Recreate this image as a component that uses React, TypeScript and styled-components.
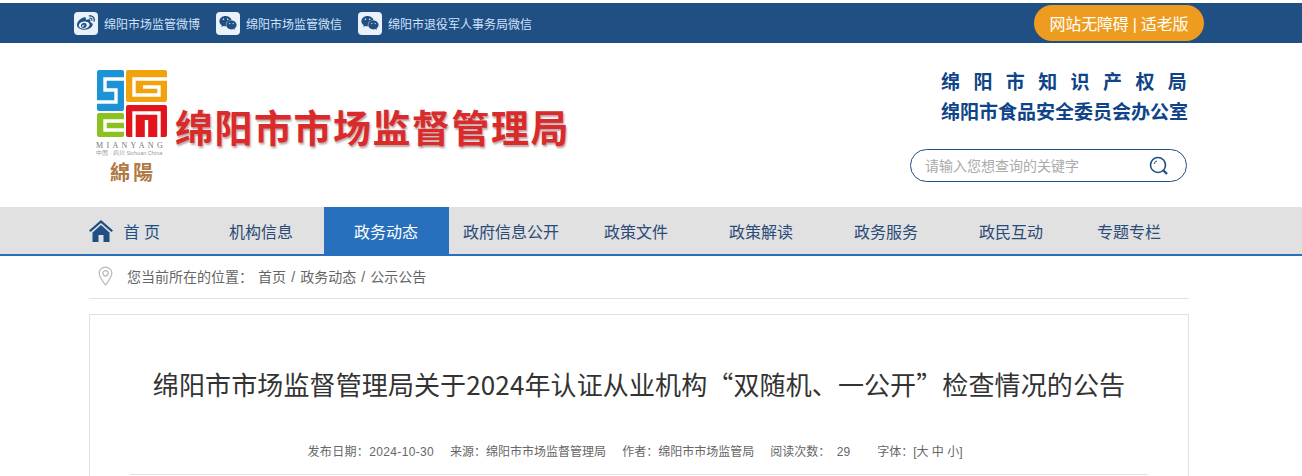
import styled, { createGlobalStyle } from "styled-components";
import { FaWeibo, FaWeixin } from "react-icons/fa";

const GlobalStyle = createGlobalStyle`
  html, body {
    margin: 0;
    padding: 0;
    background: #fff;
    font-family: "Liberation Sans", "Noto Sans CJK SC", sans-serif;
  }
  * { box-sizing: border-box; }
`

const navItems = ["机构信息", "政务动态", "政府信息公开", "政策文件", "政策解读", "政务服务", "政民互动", "专题专栏"];

const Page = styled.div`
  width: 1302px;
  height: 476px;
  padding-top: 3px;
  overflow: hidden;
`
const TopBar = styled.div`
  display: flex;
  justify-content: center;
  height: 40px;
  padding-right: 24px;
  background: #1f4f83;
`
const TopInner = styled.div`
  display: flex;
  align-items: center;
  justify-content: space-between;
  width: 1130px;
`
const Socials = styled.div`
  display: flex;
  gap: 16px;
`
const Social = styled.a`
  display: flex;
  align-items: center;
  gap: 6px;
  color: #cfe3fb;
  font-size: 12px;
`
const SocialIcon = styled.span`
  display: flex;
  align-items: center;
  justify-content: center;
  width: 24px;
  height: 23px;
  border-radius: 4px;
  background: #eaf1fb;
  color: #1f4f83;
  font-size: 18px;
`
const OldButton = styled.a`
  display: flex;
  align-items: center;
  justify-content: center;
  width: 170px;
  height: 36px;
  border-radius: 18px;
  background: #ee9c20;
  color: #fff;
  font-size: 16px;
  letter-spacing: -0.2px;
`
const Header = styled.header`
  display: flex;
  justify-content: center;
  height: 164px;
  padding-right: 24px;
`
const HeaderInner = styled.div`
  display: flex;
  justify-content: space-between;
  width: 1100px;
`
const Brand = styled.div`
  display: flex;
  align-items: flex-start;
  padding: 27px 0 0 7px;
`
const SiteName = styled.h1`
  margin: 36px 0 0 7px;
  color: #d92b2b;
  font-size: 38px;
  line-height: 46px;
  font-weight: 700;
  letter-spacing: 1.5px;
  text-shadow: 1px 2px 2px rgba(90, 30, 30, 0.4);
  white-space: nowrap;
`
const HeaderRight = styled.div`
  display: flex;
  flex-direction: column;
  align-items: flex-end;
  padding: 25px 2px 0 0;
`
const OrgName = styled.div<{ $spread?: boolean }>`
  width: 246px;
  height: 30px;
  color: #0f4488;
  font-size: 19px;
  line-height: 30px;
  font-weight: 700;
  white-space: nowrap;
  letter-spacing: ${(p) => (p.$spread ? "13.4px" : "0")};
`
const SearchBox = styled.div`
  display: flex;
  align-items: center;
  justify-content: space-between;
  width: 277px;
  height: 33px;
  margin-top: 21px;
  padding: 0 17px 0 14px;
  border: 1px solid #1f4f83;
  border-radius: 17px;
  color: #aaa;
  font-size: 14px;
`
const SearchHint = styled.span`
  margin-bottom: 2px;
`
const NavBar = styled.nav`
  display: flex;
  justify-content: center;
  height: 49px;
  background: #e1e1e1;
  border-bottom: 2px solid #2870bd;
`
const NavInner = styled.div`
  display: flex;
  width: 1125px;
`
const HomeItem = styled.a`
  display: flex;
  align-items: center;
  gap: 11px;
  width: 110px;
  height: 47px;
  color: #1f4f83;
  font-size: 16px;
`
const NavItem = styled.a<{ $active?: boolean }>`
  display: flex;
  align-items: center;
  justify-content: center;
  width: 125px;
  height: 47px;
  color: ${(p) => (p.$active ? "#fff" : "#2a4a78")};
  background: ${(p) => (p.$active ? "#2870bd" : "transparent")};
  font-size: 16px;
  white-space: nowrap;

  &:last-child {
    width: 111px;
  }
`
const Main = styled.main`
  display: flex;
  flex-direction: column;
  width: 1100px;
  margin-left: 89px;
`
const Crumbs = styled.div`
  display: flex;
  align-items: center;
  height: 43px;
  padding: 0 0 2px 9px;
  border-bottom: 1px solid #e1e1e1;
  color: #666;
  font-size: 14px;
  word-spacing: 1.25px;
  white-space: pre;
`
const CrumbLabel = styled.span`
  margin: 0 5px 0 14px;
`
const Article = styled.article`
  height: 170px;
  margin-top: 15px;
  padding: 0 40px;
  border: 1px solid #e1e1e1;
`
const Title = styled.h2`
  margin: 49px 0 0;
  color: #333;
  font-family: "Noto Sans CJK SC", "Liberation Sans", sans-serif;
  font-size: 26px;
  line-height: 40px;
  font-weight: 400;
  letter-spacing: 0.12px;
  text-align: center;
  white-space: nowrap;
`
const Meta = styled.div`
  display: flex;
  justify-content: center;
  gap: 16px;
  height: 34px;
  margin-top: 37px;
  padding-right: 8px;
  border-bottom: 1px solid #e1e1e1;
  color: #666;
  font-size: 12px;
  line-height: 22px;
  white-space: pre;
`
const MetaDate = styled.span`
  letter-spacing: 0.35px;
`
const MetaFont = styled.span`
  margin-left: 11px;
`

const Logo = () => (
  <svg width="72" height="116" viewBox="0 0 72 116">
    <rect x="1" width="27" height="41" rx="2" fill="#1b93d6" />
    <rect x="30" width="41" height="32" rx="2" fill="#f2a20c" />
    <rect x="1" y="43" width="27" height="24" rx="2" fill="#8cc220" />
    <rect x="30" y="35" width="41" height="32" rx="2" fill="#e2141c" />
    <g fill="none" stroke="#fff" strokeWidth="3.4">
      <path d="M28 9H9v11h11v12H1" />
      <path d="M71 9H38v16h25v-8H47" />
      <path d="M28 51H9v9h19" />
      <path d="M38 67V43h25v24M50.500 50v17" />
    </g>
    <text x="0" y="78" fontSize="8" letterSpacing="3.300" fill="#777" fontFamily="Liberation Serif">MIANYANG</text>
    <text x="0" y="85" fontSize="5.500" fill="#999" fontFamily="Liberation Sans">中国 · 四川 Sichuan China</text>
    <text x="14" y="110" fontSize="20" fontWeight="700" letterSpacing="3" fill="#b07a45" fontFamily="Noto Sans CJK TC">綿陽</text>
  </svg>
);

const SearchIcon = () => (
  <svg width="20" height="20" viewBox="0 0 20 20" fill="none" stroke="#1f4f83">
    <circle cx="9" cy="9" r="7.500" strokeWidth="1.600" />
    <path d="M14.500 14.500 18 18" strokeWidth="2.400" />
    <path d="M5 8a4 4 0 0 1 3-3" strokeWidth="1" />
  </svg>
);

const HomeIcon = () => (
  <svg width="24" height="22" viewBox="0 0 24 22" fill="#1f4f83">
    <path d="M12 0 0 10.500l1.500 1.600L12 3l10.500 9.100 1.500-1.600z" />
    <path d="M12 5 3.500 12.500V22h6v-7h5v7h6v-9.500z" />
  </svg>
);

const PinIcon = () => (
  <svg width="15" height="20" viewBox="0 0 14 19" fill="none" stroke="#bbb" strokeWidth="1.200">
    <path d="M7 18C3.500 13 1 10.500 1 7a6 6 0 0 1 12 0c0 3.500-2.500 6-6 11z" />
    <circle cx="7" cy="7" r="2.500" />
  </svg>
);

const App = () => (
  <Page>
    <GlobalStyle />
    <TopBar>
      <TopInner>
        <Socials>
          <Social><SocialIcon><FaWeibo /></SocialIcon>绵阳市场监管微博</Social>
          <Social><SocialIcon><FaWeixin /></SocialIcon>绵阳市场监管微信</Social>
          <Social><SocialIcon><FaWeixin /></SocialIcon>绵阳市退役军人事务局微信</Social>
        </Socials>
        <OldButton>网站无障碍 | 适老版</OldButton>
      </TopInner>
    </TopBar>
    <Header>
      <HeaderInner>
        <Brand>
          <Logo />
          <SiteName>绵阳市市场监督管理局</SiteName>
        </Brand>
        <HeaderRight>
          <OrgName $spread>绵阳市知识产权局</OrgName>
          <OrgName>绵阳市食品安全委员会办公室</OrgName>
          <SearchBox><SearchHint>请输入您想查询的关键字</SearchHint><SearchIcon /></SearchBox>
        </HeaderRight>
      </HeaderInner>
    </Header>
    <NavBar>
      <NavInner>
        <HomeItem><HomeIcon />首 页</HomeItem>
        {navItems.map((item) => (
          <NavItem key={item} $active={item === "政务动态"}>{item}</NavItem>
        ))}
      </NavInner>
    </NavBar>
    <Main>
      <Crumbs>
        <PinIcon />
        <CrumbLabel>您当前所在的位置：</CrumbLabel>
        <span>首页 / 政务动态 / 公示公告</span>
      </Crumbs>
      <Article>
        <Title>绵阳市市场监督管理局关于2024年认证从业机构“双随机、一公开”检查情况的公告</Title>
        <Meta>
          <MetaDate>发布日期：2024-10-30</MetaDate>
          <span>来源：绵阳市市场监督管理局</span>
          <span>作者：绵阳市市场监管局</span>
          <span>阅读次数：  29</span>
          <MetaFont>字体：[大 中 小]</MetaFont>
        </Meta>
      </Article>
    </Main>
  </Page>
);

export default App;
